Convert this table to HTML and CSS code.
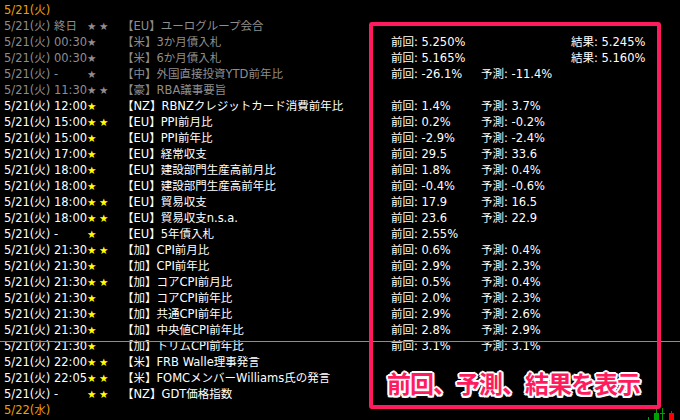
FILE: index.html
```html
<!DOCTYPE html>
<html lang="ja">
<head>
<meta charset="utf-8">
<title>経済指標</title>
<link rel="stylesheet" href="styles.css">
</head>
<body>
<div class="list">
  <div class="row day"><span class="l">5/21(火)</span></div>
  <div class="row past"><span class="l"><span class="dt">5/21(火) 終日</span><span class="stars"><i>★</i><i>★</i></span><span class="name">【EU】ユーログループ会合</span></span></div>
  <div class="row past"><span class="l"><span class="dt">5/21(火) 00:30</span><span class="stars"><i>★</i></span><span class="name">【米】3か月債入札</span></span><span class="c">前回: 5.250%</span><span class="c"></span><span class="c">結果: 5.245%</span></div>
  <div class="row past"><span class="l"><span class="dt">5/21(火) 00:30</span><span class="stars"><i>★</i></span><span class="name">【米】6か月債入札</span></span><span class="c">前回: 5.165%</span><span class="c"></span><span class="c">結果: 5.160%</span></div>
  <div class="row past"><span class="l"><span class="dt">5/21(火) -</span><span class="stars"><i>★</i></span><span class="name">【中】外国直接投資YTD前年比</span></span><span class="c">前回: -26.1%</span><span class="c">予測: -11.4%</span></div>
  <div class="row past"><span class="l"><span class="dt">5/21(火) 11:30</span><span class="stars"><i>★</i><i>★</i></span><span class="name">【豪】RBA議事要旨</span></span></div>
  <div class="row"><span class="l"><span class="dt">5/21(火) 12:00</span><span class="stars"><i>★</i></span><span class="name">【NZ】RBNZクレジットカード消費前年比</span></span><span class="c">前回: 1.4%</span><span class="c">予測: 3.7%</span></div>
  <div class="row"><span class="l"><span class="dt">5/21(火) 15:00</span><span class="stars"><i>★</i><i>★</i></span><span class="name">【EU】PPI前月比</span></span><span class="c">前回: 0.2%</span><span class="c">予測: -0.2%</span></div>
  <div class="row"><span class="l"><span class="dt">5/21(火) 15:00</span><span class="stars"><i>★</i></span><span class="name">【EU】PPI前年比</span></span><span class="c">前回: -2.9%</span><span class="c">予測: -2.4%</span></div>
  <div class="row"><span class="l"><span class="dt">5/21(火) 17:00</span><span class="stars"><i>★</i></span><span class="name">【EU】経常収支</span></span><span class="c">前回: 29.5</span><span class="c">予測: 33.6</span></div>
  <div class="row"><span class="l"><span class="dt">5/21(火) 18:00</span><span class="stars"><i>★</i></span><span class="name">【EU】建設部門生産高前月比</span></span><span class="c">前回: 1.8%</span><span class="c">予測: 0.4%</span></div>
  <div class="row"><span class="l"><span class="dt">5/21(火) 18:00</span><span class="stars"><i>★</i></span><span class="name">【EU】建設部門生産高前年比</span></span><span class="c">前回: -0.4%</span><span class="c">予測: -0.6%</span></div>
  <div class="row"><span class="l"><span class="dt">5/21(火) 18:00</span><span class="stars"><i>★</i><i>★</i></span><span class="name">【EU】貿易収支</span></span><span class="c">前回: 17.9</span><span class="c">予測: 16.5</span></div>
  <div class="row"><span class="l"><span class="dt">5/21(火) 18:00</span><span class="stars"><i>★</i><i>★</i></span><span class="name">【EU】貿易収支n.s.a.</span></span><span class="c">前回: 23.6</span><span class="c">予測: 22.9</span></div>
  <div class="row"><span class="l"><span class="dt">5/21(火) -</span><span class="stars"><i>★</i></span><span class="name">【EU】5年債入札</span></span><span class="c">前回: 2.55%</span></div>
  <div class="row"><span class="l"><span class="dt">5/21(火) 21:30</span><span class="stars"><i>★</i><i>★</i></span><span class="name">【加】CPI前月比</span></span><span class="c">前回: 0.6%</span><span class="c">予測: 0.4%</span></div>
  <div class="row"><span class="l"><span class="dt">5/21(火) 21:30</span><span class="stars"><i>★</i></span><span class="name">【加】CPI前年比</span></span><span class="c">前回: 2.9%</span><span class="c">予測: 2.3%</span></div>
  <div class="row"><span class="l"><span class="dt">5/21(火) 21:30</span><span class="stars"><i>★</i><i>★</i></span><span class="name">【加】コアCPI前月比</span></span><span class="c">前回: 0.5%</span><span class="c">予測: 0.4%</span></div>
  <div class="row"><span class="l"><span class="dt">5/21(火) 21:30</span><span class="stars"><i>★</i></span><span class="name">【加】コアCPI前年比</span></span><span class="c">前回: 2.0%</span><span class="c">予測: 2.3%</span></div>
  <div class="row"><span class="l"><span class="dt">5/21(火) 21:30</span><span class="stars"><i>★</i></span><span class="name">【加】共通CPI前年比</span></span><span class="c">前回: 2.9%</span><span class="c">予測: 2.6%</span></div>
  <div class="row"><span class="l"><span class="dt">5/21(火) 21:30</span><span class="stars"><i>★</i></span><span class="name">【加】中央値CPI前年比</span></span><span class="c">前回: 2.8%</span><span class="c">予測: 2.9%</span></div>
  <div class="row"><span class="l"><span class="dt">5/21(火) 21:30</span><span class="stars"><i>★</i></span><span class="name">【加】トリムCPI前年比</span></span><span class="c">前回: 3.1%</span><span class="c">予測: 3.1%</span></div>
  <div class="row"><span class="l"><span class="dt">5/21(火) 22:00</span><span class="stars"><i>★</i><i>★</i></span><span class="name">【米】FRB Walle理事発言</span></span></div>
  <div class="row"><span class="l"><span class="dt">5/21(火) 22:05</span><span class="stars"><i>★</i><i>★</i></span><span class="name">【米】FOMCメンバーWilliams氏の発言</span></span></div>
  <div class="row"><span class="l"><span class="dt">5/21(火) -</span><span class="stars"><i>★</i><i>★</i></span><span class="name">【NZ】GDT価格指数</span></span></div>
  <div class="row day"><span class="l">5/22(水)</span></div>
</div>

<div class="crosshair"></div>

<div class="callout">
  <div class="callout-text">前回、予測、結果を表示</div>
</div>

<div class="candle g1"></div>
<div class="candle g2"><span class="wick"></span></div>
<div class="candle g3"><span class="tick"></span></div>
<div class="candle r1"><span class="wick"></span></div>
</body>
</html>
```

FILE: styles.css
```css
html, body {
  margin: 0;
  padding: 0;
  background: #000;
  width: 680px;
  height: 420px;
  overflow: hidden;
}

body {
  position: relative;
  font-family: "DejaVu Sans", "Noto Sans CJK JP", sans-serif;
  font-size: 11.5px;
  color: #fff;
}

.list {
  padding: 2px 0 0 4px;
}

.row {
  display: flex;
  height: 16px;
  line-height: 16px;
  white-space: nowrap;
}

.l {
  display: flex;
  width: 387px;
  flex: none;
}

.dt {
  width: 83px;
  flex: none;
}

.stars {
  width: 35px;
  flex: none;
  display: flex;
}

.stars i {
  font-style: normal;
  width: 12px;
  color: #ffff00;
  font-size: 10.5px;
}

.row.past .l { color: #8e8e8e; }
.row.past .stars i { color: #8e8e8e; }

.row.day .l { color: #f0a000; }

.c {
  width: 90px;
  flex: none;
}

.crosshair {
  position: absolute;
  left: 0;
  right: 0;
  top: 341px;
  height: 1px;
  background: #8c8c8c;
}

.callout {
  position: absolute;
  left: 369px;
  top: 22px;
  width: 284px;
  height: 379px;
  border: 4px solid #ff1b5e;
  border-radius: 3px;
  display: flex;
  flex-direction: column;
  justify-content: flex-end;
  padding: 0 0 9px 14px;
  box-sizing: content-box;
  width: 270px;
  height: 370px;
}

.callout-text {
  font-family: "Noto Sans CJK JP", sans-serif;
  font-weight: 700;
  font-size: 24px;
  line-height: 26px;
  letter-spacing: -1px;
  color: #ff1b5e;
  white-space: nowrap;
  text-shadow:
    2px 0 0 #fff, -2px 0 0 #fff, 0 2px 0 #fff, 0 -2px 0 #fff,
    1.5px 1.5px 0 #fff, -1.5px 1.5px 0 #fff, 1.5px -1.5px 0 #fff, -1.5px -1.5px 0 #fff,
    0 0 5px rgba(0,0,0,0.9), 2px 2px 4px rgba(40,40,40,0.9);
}

.candle {
  position: absolute;
  bottom: 0;
}

.g1 {
  left: 648px;
  width: 1px;
  height: 3px;
  background: #00a000;
}

.g2 {
  left: 654px;
  width: 5px;
  height: 7px;
  background: #00a000;
}

.g2 .wick {
  position: absolute;
  left: 2px;
  top: -4px;
  width: 1px;
  height: 4px;
  background: #00a000;
}

.g3 {
  left: 662px;
  width: 1px;
  height: 12px;
  background: #00a000;
}

.g3 .tick {
  position: absolute;
  left: -2px;
  top: 5px;
  width: 5px;
  height: 1px;
  background: #00a000;
}

.r1 {
  left: 669px;
  width: 5px;
  height: 7px;
  background: #ff0000;
}

.r1 .wick {
  position: absolute;
  left: 2px;
  top: -2px;
  width: 1px;
  height: 2px;
  background: #ff0000;
}
```
